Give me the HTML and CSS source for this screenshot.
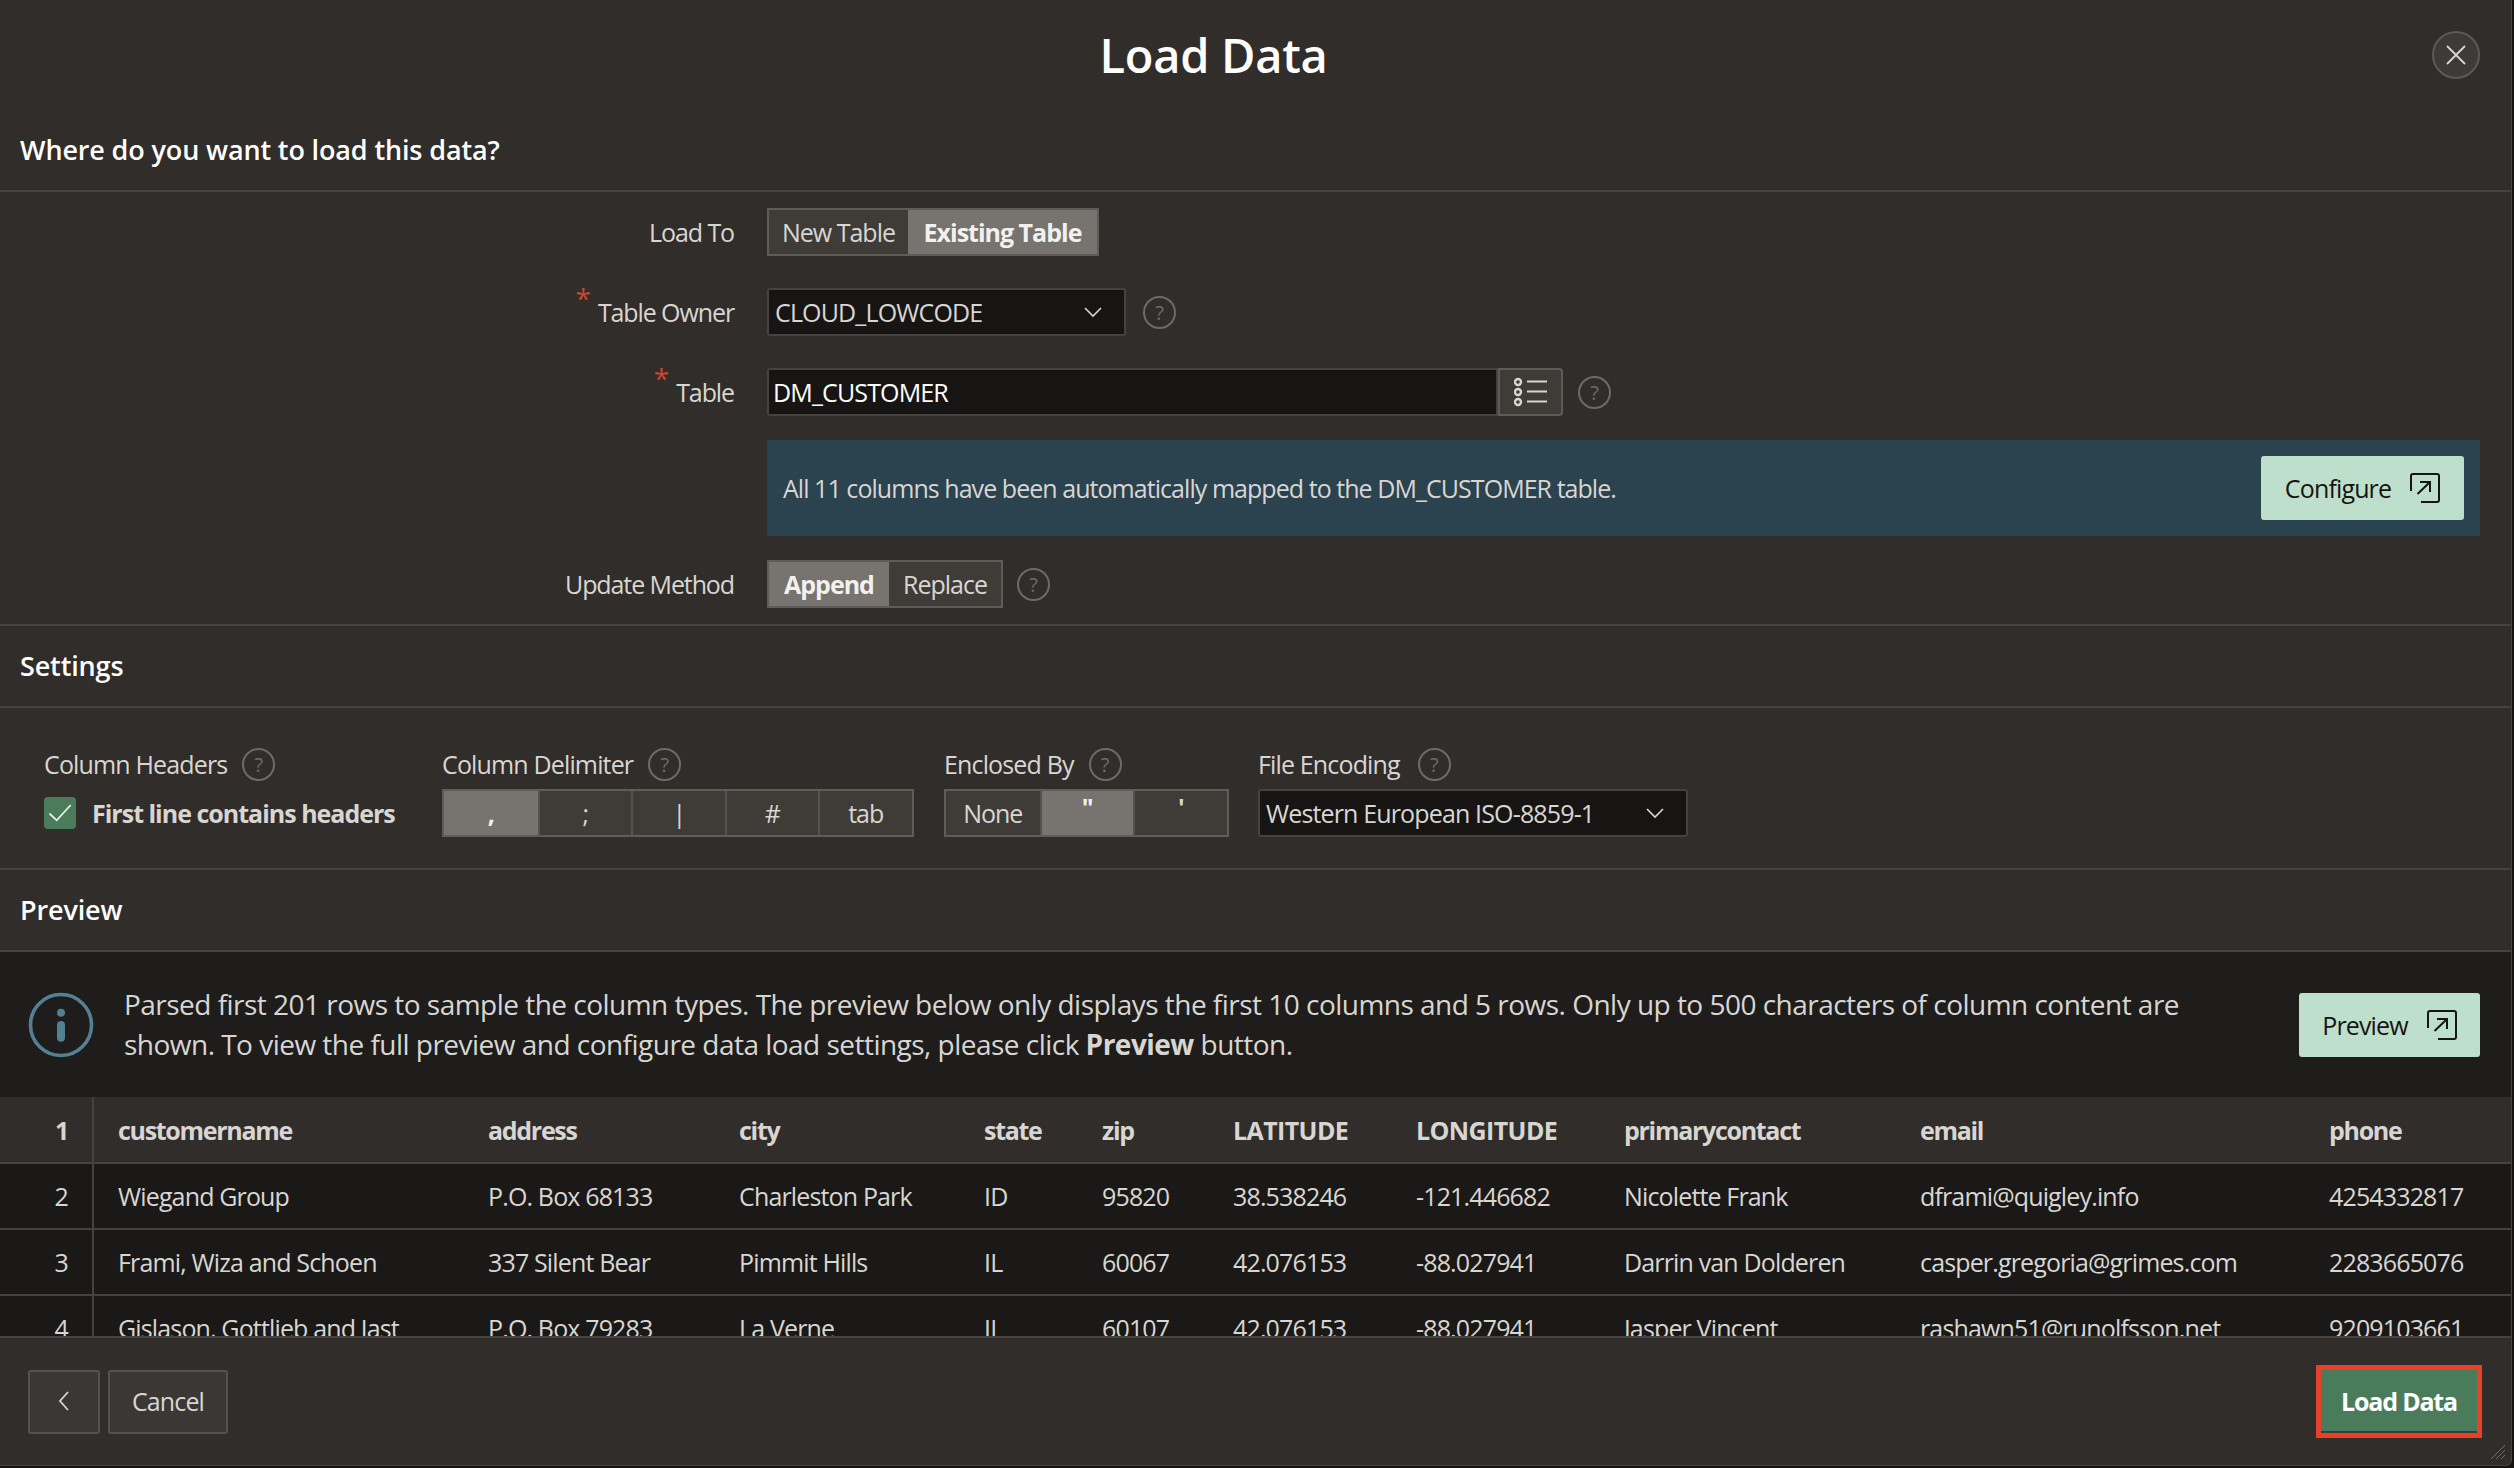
FILE: index.html
```html
<!DOCTYPE html>
<html lang="en">

<head>
  <meta charset="UTF-8">
  <meta name="viewport" content="width=device-width, initial-scale=1.0">
  <title>Load Data</title>

  <link rel="stylesheet" href="styles.css">
</head>

<body>
  <div class="dialog">
    <div class="title-bar">
      <h1>Load Data</h1>
      <a class="close" href="#">
        <svg width="22" height="22" viewBox="0 0 22 22"><path d="M2 2l18 18M20 2L2 20" /></svg>
      </a>
    </div>

    <h2 class="section-head first">Where do you want to load this data?</h2>

    <div class="form">
      <div class="row">
        <label>Load To</label>
        <div class="toggle">
          <span class="opt w-new">New Table</span>
          <span class="opt on w-existing">Existing Table</span>
        </div>
      </div>
      <div class="row">
        <label><sup>*</sup>Table Owner</label>
        <div class="select owner"><span>CLOUD_LOWCODE</span>
          <svg class="chev" width="20" height="12" viewBox="0 0 20 12"><path d="M2 2l8 8 8-8" /></svg>
        </div>
        <span class="help">?</span>
      </div>
      <div class="row tight">
        <label><sup>*</sup>Table</label>
        <div class="lookup">
          <div class="input">DM_CUSTOMER</div>
          <a class="list-btn" href="#">
            <svg width="34" height="30" viewBox="0 0 34 30">
              <circle cx="4" cy="5" r="3" /><circle cx="4" cy="15" r="3" /><circle cx="4" cy="25" r="3" />
              <path d="M13 4.500h20M13 14.500h20M13 24.500h20" />
            </svg>
          </a>
        </div>
        <span class="help">?</span>
      </div>
      <div class="row strip-row">
        <div class="strip">
          <span>All 11 columns have been automatically mapped to the DM_CUSTOMER table.</span>
          <a class="btn-mint configure" href="#">Configure
            <svg width="30" height="30" viewBox="0 0 30 30"><path d="M1 18V3a2 2 0 0 1 2-2h24a2 2 0 0 1 2 2v24a2 2 0 0 1-2 2H11M7.500 21L20 9M10 9h10v10" /></svg>
          </a>
        </div>
      </div>
      <div class="row">
        <label>Update Method</label>
        <div class="toggle">
          <span class="opt on w-append">Append</span>
          <span class="opt w-replace">Replace</span>
        </div>
        <span class="help">?</span>
      </div>
    </div>

    <h2 class="section-head">Settings</h2>

    <div class="settings">
      <div class="field f-headers">
        <div class="field-label">Column Headers <span class="help">?</span></div>
        <div class="check">
          <span class="box">
            <svg width="32" height="32" viewBox="0 0 32 32"><path d="M5.500 16.500l7.200 6.800L26.700 8" /></svg>
          </span>
          <b>First line contains headers</b>
        </div>
      </div>
      <div class="field f-delim">
        <div class="field-label">Column Delimiter <span class="help">?</span></div>
        <div class="toggle cells">
          <span class="opt on">,</span>
          <span class="opt">;</span>
          <span class="opt">|</span>
          <span class="opt">#</span>
          <span class="opt">tab</span>
        </div>
      </div>
      <div class="field f-enclosed">
        <div class="field-label">Enclosed By <span class="help">?</span></div>
        <div class="toggle cells">
          <span class="opt">None</span>
          <span class="opt on quote">"</span>
          <span class="opt quote">'</span>
        </div>
      </div>
      <div class="field f-encoding">
        <div class="field-label">File Encoding <span class="help">?</span></div>
        <div class="select encoding"><span>Western European ISO-8859-1</span>
          <svg class="chev" width="20" height="12" viewBox="0 0 20 12"><path d="M2 2l8 8 8-8" /></svg>
        </div>
      </div>
    </div>

    <h2 class="section-head">Preview</h2>

    <div class="notice">
      <svg class="info-icon" width="66" height="66" viewBox="0 0 66 66">
        <circle cx="33" cy="33" r="30.500" />
        <circle class="dot" cx="33" cy="20.700" r="4" />
        <path d="M33 33v12.700" />
      </svg>
      <p>Parsed first 201 rows to sample the column types. The preview below only displays the first 10 columns and 5 rows. Only up to 500 characters of column content are shown. To view the full preview and configure data load settings, please click <b>Preview</b> button.</p>
      <a class="btn-mint preview" href="#">Preview
        <svg width="30" height="30" viewBox="0 0 30 30"><path d="M1 18V3a2 2 0 0 1 2-2h24a2 2 0 0 1 2 2v24a2 2 0 0 1-2 2H11M7.500 21L20 9M10 9h10v10" /></svg>
      </a>
    </div>

    <div class="table-wrap">
      <table>
        <thead>
          <tr>
            <th class="num">1</th>
            <th class="c1">customername</th>
            <th class="c2">address</th>
            <th class="c3">city</th>
            <th class="c4">state</th>
            <th class="c5">zip</th>
            <th class="c6">LATITUDE</th>
            <th class="c7">LONGITUDE</th>
            <th class="c8">primarycontact</th>
            <th class="c9">email</th>
            <th>phone</th>
          </tr>
        </thead>
        <tbody>
          <tr>
            <td class="num">2</td>
            <td class="c1">Wiegand Group</td>
            <td>P.O. Box 68133</td>
            <td>Charleston Park</td>
            <td>ID</td>
            <td>95820</td>
            <td>38.538246</td>
            <td>-121.446682</td>
            <td>Nicolette Frank</td>
            <td>dframi@quigley.info</td>
            <td>4254332817</td>
          </tr>
          <tr>
            <td class="num">3</td>
            <td class="c1">Frami, Wiza and Schoen</td>
            <td>337 Silent Bear</td>
            <td>Pimmit Hills</td>
            <td>IL</td>
            <td>60067</td>
            <td>42.076153</td>
            <td>-88.027941</td>
            <td>Darrin van Dolderen</td>
            <td>casper.gregoria@grimes.com</td>
            <td>2283665076</td>
          </tr>
          <tr>
            <td class="num">4</td>
            <td class="c1">Gislason, Gottlieb and Jast</td>
            <td>P.O. Box 79283</td>
            <td>La Verne</td>
            <td>IL</td>
            <td>60107</td>
            <td>42.076153</td>
            <td>-88.027941</td>
            <td>Jasper Vincent</td>
            <td>rashawn51@runolfsson.net</td>
            <td>9209103661</td>
          </tr>
        </tbody>
      </table>
    </div>

    <div class="footer">
      <div class="footer-left">
        <a class="btn back" href="#">
          <svg width="14" height="24" viewBox="0 0 14 24"><path d="M11 3l-8 9 8 9" /></svg>
        </a>
        <a class="btn cancel" href="#">Cancel</a>
      </div>
      <a class="btn-load" href="#">Load Data</a>
    </div>

    <svg class="grip" width="16" height="16" viewBox="0 0 16 16"><path d="M1 15L15 1M6 15L15 6M11 15l4-4" /></svg>
  </div>
</body>

</html>
```

FILE: styles.css
```css
* {
  margin: 0;
  padding: 0;
  box-sizing: border-box;
}

html,
body {
  height: 100%;
}

body {
  background-color: #141312;
  font-family: "Open Sans", "Noto Sans", sans-serif;
  font-size: 25px;
  letter-spacing: -0.85px;
  color: #d8d6d3;
  overflow: hidden;
}

a {
  text-decoration: none;
  color: inherit;
}

.dialog {
  position: relative;
  display: flex;
  flex-direction: column;
  width: 2512px;
  height: 1466px;
  background-color: #312d2a;
  border-right: 1px solid #45423f;
  border-bottom: 1px solid #45423f;
  border-bottom-right-radius: 6px;
  overflow: hidden;
}

.title-bar {
  position: relative;
  height: 110px;
  text-align: center;
}

.title-bar h1 {
  padding: 25px 84px 0 0;
  font-size: 47px;
  line-height: 60px;
  font-weight: 600;
  letter-spacing: -0.3px;
  color: #fff;
}

.close {
  position: absolute;
  top: 31px;
  right: 31px;
  display: flex;
  align-items: center;
  justify-content: center;
  width: 48px;
  height: 48px;
  border: 2px solid #5c5956;
  border-radius: 50%;
  background-color: #3d3a37;
}

.close path {
  stroke: #d8d6d3;
  stroke-width: 1.800;
  fill: none;
}

.section-head {
  height: 82px;
  padding-left: 20px;
  font-size: 27px;
  line-height: 79px;
  font-weight: 600;
  letter-spacing: -0.14px;
  color: #fff;
  border-bottom: 2px solid #45423f;
}

.form {
  height: 434px;
  padding-top: 16px;
  border-bottom: 2px solid #45423f;
}

.row {
  display: flex;
  align-items: center;
  height: 48px;
  margin-bottom: 32px;
}

.row.tight {
  margin-bottom: 24px;
}

.row label {
  width: 734px;
  text-align: right;
  letter-spacing: -1.1px;
  color: #d8d6d3;
}

.row label sup {
  position: relative;
  top: -4px;
  margin-right: 8px;
  font-size: 28px;
  line-height: 0;
  vertical-align: super;
  color: #c74634;
}

.row > .toggle,
.row > .select,
.row > .lookup {
  margin-left: 33px;
}

.toggle {
  display: flex;
  height: 48px;
  border: 2px solid #5f5c59;
  background-color: #3f3c38;
}

.row > .toggle + .help {
  margin-left: 14px;
}

.owner + .help {
  margin-left: 17px;
}

.opt {
  display: flex;
  align-items: center;
  justify-content: center;
  letter-spacing: -1px;
  color: #d8d6d3;
}

.opt.on {
  background-color: #77736e;
  color: #f2f1ef;
  font-weight: 700;
}

.w-new { width: 139px; }
.w-existing { width: 189px; }
.w-append { width: 120px; }
.w-replace { width: 112px; }

.select {
  display: flex;
  align-items: center;
  justify-content: space-between;
  height: 48px;
  padding: 0 21px 0 6px;
  background-color: #161513;
  border: 2px solid #45423f;
  border-radius: 3px;
}

.owner { width: 359px; }

.chev path {
  stroke: #d8d6d3;
  stroke-width: 1.600;
  fill: none;
}

.help {
  display: inline-flex;
  align-items: center;
  justify-content: center;
  width: 33px;
  height: 33px;
  margin-left: 15px;
  border: 2px solid #6e6b67;
  border-radius: 50%;
  font-size: 20px;
  letter-spacing: 0;
  color: #6e6b67;
}

.lookup {
  display: flex;
  width: 796px;
}

.lookup .input {
  flex: 1;
  height: 48px;
  padding-left: 4px;
  line-height: 44px;
  color: #fff;
  background-color: #161513;
  border: 2px solid #45423f;
  border-radius: 3px 0 0 3px;
}

.list-btn {
  display: flex;
  align-items: center;
  justify-content: center;
  width: 65px;
  height: 48px;
  background-color: #3f3c38;
  border: 2px solid #5f5c59;
  border-radius: 0 4px 4px 0;
}

.list-btn circle {
  stroke: #d8d6d3;
  stroke-width: 2.400;
  fill: none;
}

.list-btn path {
  stroke: #d8d6d3;
  stroke-width: 2;
  fill: none;
}

.strip-row {
  height: 96px;
  margin-bottom: 24px;
  padding-left: 767px;
  padding-right: 31px;
}

.strip {
  display: flex;
  flex: 1;
  align-items: center;
  justify-content: space-between;
  height: 96px;
  padding: 0 16px;
  background-color: #2b424f;
  letter-spacing: -0.95px;
  color: #d8d6d3;
}

.btn-mint {
  display: flex;
  align-items: center;
  justify-content: center;
  gap: 19px;
  background-color: #bddfcb;
  border-radius: 3px;
  letter-spacing: -0.85px;
  color: #161513;
}

.btn-mint path {
  stroke: #161513;
  stroke-width: 2;
  fill: none;
}

.configure {
  width: 203px;
  height: 64px;
}

.settings {
  display: flex;
  height: 162px;
  padding: 36px 0 0 44px;
  border-bottom: 2px solid #45423f;
}

.field-label {
  display: flex;
  align-items: center;
  height: 40px;
  margin-bottom: 5px;
}

.field-label .help {
  margin-left: 15px;
}

.f-headers { width: 398px; }
.f-delim { width: 502px; }
.f-enclosed { width: 314px; }

.f-encoding .help {
  margin-left: 18px;
}

.check {
  display: flex;
  align-items: center;
  height: 48px;
  gap: 16px;
}

.check b {
  font-weight: 700;
  letter-spacing: -1px;
}

.box {
  display: flex;
  width: 32px;
  height: 32px;
  background-color: #4a7c5c;
  border-radius: 4px;
}

.box path {
  stroke: #e8f0ea;
  stroke-width: 1.800;
  fill: none;
}

.cells {
  width: fit-content;
}

.cells .opt {
  width: 93.500px;
  border-left: 2px solid #55524f;
}

.cells .opt:first-child {
  border-left: 0;
}

.quote {
  padding-bottom: 12px;
  font-weight: 700;
}

.encoding {
  width: 430px;
}

.notice {
  display: flex;
  align-items: center;
  height: 145px;
  padding: 0 31px 0 28px;
  background-color: #1e1d1b;
}

.notice p {
  flex: 1;
  margin: 0 60px 2px 30px;
  font-size: 28px;
  line-height: 40px;
  letter-spacing: -0.52px;
}

.notice b {
  font-weight: 700;
}

.info-icon circle {
  fill: none;
  stroke: #557f92;
  stroke-width: 3.600;
}

.info-icon .dot {
  fill: #557f92;
  stroke: none;
}

.info-icon path {
  stroke: #557f92;
  stroke-width: 8;
  stroke-linecap: round;
}

.preview {
  width: 181px;
  height: 64px;
}

.table-wrap {
  height: 241px;
  overflow: hidden;
  border-bottom: 2px solid #45423f;
}

table {
  width: 100%;
  border-collapse: collapse;
  table-layout: fixed;
}

th,
td {
  height: 66px;
  padding: 0 0 0 26px;
  text-align: left;
  white-space: nowrap;
  border-bottom: 2px solid #45423f;
}

th {
  background-color: #312d2a;
  font-weight: 700;
  letter-spacing: -1.300px;
  color: #d8d6d3;
}

th.c6,
th.c7 {
  letter-spacing: -0.6px;
}

td {
  background-color: #1a1917;
}

th.c1,
td.c1 {
  padding-left: 24px;
}

.num {
  width: 93px;
  padding: 0 24px 0 0;
  text-align: right;
  border-right: 2px solid #45423f;
}

.c1 { width: 369px; }
.c2 { width: 251px; }
.c3 { width: 245px; }
.c4 { width: 118px; }
.c5 { width: 131px; }
.c6 { width: 183px; }
.c7 { width: 208px; }
.c8 { width: 296px; }
.c9 { width: 409px; }

.footer {
  display: flex;
  flex: 1;
  align-items: center;
  justify-content: space-between;
  padding: 0 29px 0 28px;
}

.footer-left {
  display: flex;
  gap: 8px;
}

.btn {
  display: flex;
  align-items: center;
  justify-content: center;
  height: 64px;
  padding-bottom: 2px;
  background-color: #3a3734;
  border: 2px solid #55524f;
  border-radius: 3px;
}

.btn path {
  stroke: #d8d6d3;
  stroke-width: 1.800;
  fill: none;
}

.back { width: 72px; }
.cancel { width: 120px; }

.btn-load {
  display: flex;
  align-items: center;
  justify-content: center;
  width: 166px;
  height: 73px;
  padding-bottom: 2px;
  background-color: #4a7c5c;
  border: 5px solid #e8402a;
  box-shadow: inset 0 -2px 0 #2c4636;
  font-weight: 700;
  letter-spacing: -1.200px;
  color: #fff;
}

/* resize handle sits over the dialog corner */
.grip {
  position: absolute;
  right: 5px;
  bottom: 5px;
}

.grip path {
  stroke: #6e6b67;
  stroke-width: 1;
  fill: none;
}
```
